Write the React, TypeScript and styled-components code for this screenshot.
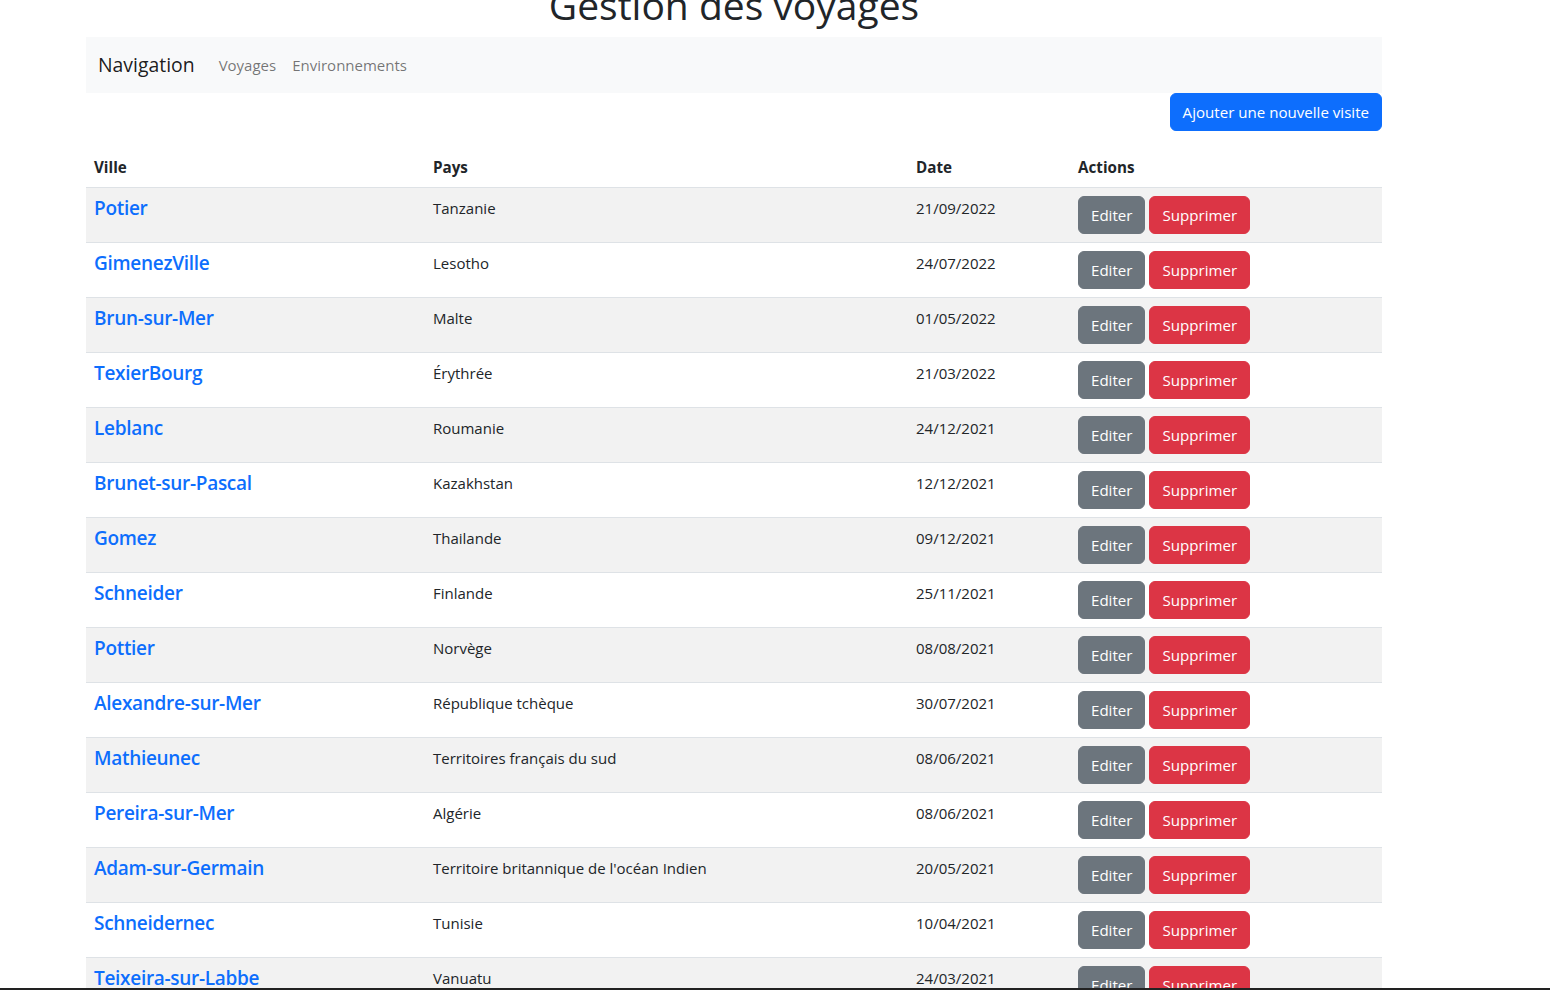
import React from "react";
import styled, { createGlobalStyle } from "styled-components";

const GlobalStyle = createGlobalStyle`
  html, body {
    margin: 0;
    padding: 0;
    background: #fff;
    overflow: hidden;
  }
  body {
    font-family: "Segoe UI", "Open Sans", "Noto Sans", "Liberation Sans", sans-serif;
    font-size: 16px;
    line-height: 1.5;
    color: #212529;
  }
  * { box-sizing: border-box; }
`;

const Page = styled.div`
  width: 1296px;
  margin-left: 86px;
`;

const Title = styled.h1`
  margin: -19px 0 8px;
  height: 48px;
  font-size: 39px;
  font-weight: 500;
  line-height: 48px;
  text-align: center;
  color: #212529;
`;

const NavBar = styled.nav`
  display: flex;
  align-items: center;
  height: 56px;
  padding: 8px 12px;
  background: #f8f9fa;
`;

const Brand = styled.span`
  font-size: 19.4px;
  line-height: 1.5;
  color: rgba(0, 0, 0, 0.9);
  margin-right: 16px;
`;

const NavLink = styled.a`
  padding: 8px;
  font-size: 15px;
  color: rgba(0, 0, 0, 0.55);
  text-decoration: none;
`;

const Toolbar = styled.div`
  display: flex;
  justify-content: flex-end;
  margin-bottom: 16px;
`;

const Button = styled.button<{ $variant: "primary" | "secondary" | "danger" }>`
  font-family: inherit;
  font-size: 15.1px;
  line-height: 24px;
  padding: 6px 12px;
  border: 1px solid transparent;
  border-radius: 6px;
  color: #fff;
  cursor: pointer;
  background: ${(p) =>
    p.$variant === "primary" ? "#0d6efd" : p.$variant === "secondary" ? "#6c757d" : "#dc3545"};
  border-color: ${(p) =>
    p.$variant === "primary" ? "#0d6efd" : p.$variant === "secondary" ? "#6c757d" : "#dc3545"};
`;

const Table = styled.table`
  width: 100%;
  border-collapse: collapse;
  table-layout: fixed;
`;

const Th = styled.th<{ $w: number }>`
  width: ${(p) => p.$w}px;
  text-align: left;
  font-size: 15.2px;
  font-weight: 700;
  padding: 8px;
  border-bottom: 1px solid #dee2e6;
  line-height: 24px;
`;

const Row = styled.tr<{ $striped: boolean }>`
  background: ${(p) => (p.$striped ? "#f2f2f2" : "#fff")};
  border-bottom: 1px solid #dee2e6;
`;

const Td = styled.td`
  padding: 8px;
  vertical-align: top;
  font-size: 15px;
  line-height: 24px;
`;

const CityLink = styled.a`
  font-size: 19px;
  line-height: 24px;
  font-weight: 600;
  letter-spacing: -0.3px;
  color: #0d6efd;
  text-decoration: none;
`;

const Actions = styled.div`
  display: flex;
  gap: 4px;
`;

const BottomEdge = styled.div`
  position: fixed;
  left: 0;
  right: 0;
  bottom: 0;
  height: 2px;
  background: #222;
`;

const rows: [string, string, string][] = [
  ["Potier", "Tanzanie", "21/09/2022"],
  ["GimenezVille", "Lesotho", "24/07/2022"],
  ["Brun-sur-Mer", "Malte", "01/05/2022"],
  ["TexierBourg", "Érythrée", "21/03/2022"],
  ["Leblanc", "Roumanie", "24/12/2021"],
  ["Brunet-sur-Pascal", "Kazakhstan", "12/12/2021"],
  ["Gomez", "Thailande", "09/12/2021"],
  ["Schneider", "Finlande", "25/11/2021"],
  ["Pottier", "Norvège", "08/08/2021"],
  ["Alexandre-sur-Mer", "République tchèque", "30/07/2021"],
  ["Mathieunec", "Territoires français du sud", "08/06/2021"],
  ["Pereira-sur-Mer", "Algérie", "08/06/2021"],
  ["Adam-sur-Germain", "Territoire britannique de l'océan Indien", "20/05/2021"],
  ["Schneidernec", "Tunisie", "10/04/2021"],
  ["Teixeira-sur-Labbe", "Vanuatu", "24/03/2021"],
];

export default function App() {
  return (
    <>
      <GlobalStyle />
      <Page>
        <Title>Gestion des voyages</Title>
        <NavBar>
          <Brand>Navigation</Brand>
          <NavLink href="#">Voyages</NavLink>
          <NavLink href="#">Environnements</NavLink>
        </NavBar>
        <Toolbar>
          <Button $variant="primary">Ajouter une nouvelle visite</Button>
        </Toolbar>
        <Table>
          <thead>
            <tr>
              <Th $w={339}>Ville</Th>
              <Th $w={483}>Pays</Th>
              <Th $w={162}>Date</Th>
              <Th $w={312}>Actions</Th>
            </tr>
          </thead>
          <tbody>
            {rows.map(([ville, pays, date], i) => (
              <Row key={ville} $striped={i % 2 === 0}>
                <Td>
                  <CityLink href="#">{ville}</CityLink>
                </Td>
                <Td>{pays}</Td>
                <Td>{date}</Td>
                <Td>
                  <Actions>
                    <Button $variant="secondary">Editer</Button>
                    <Button $variant="danger">Supprimer</Button>
                  </Actions>
                </Td>
              </Row>
            ))}
          </tbody>
        </Table>
      </Page>
      <BottomEdge />
    </>
  );
}
